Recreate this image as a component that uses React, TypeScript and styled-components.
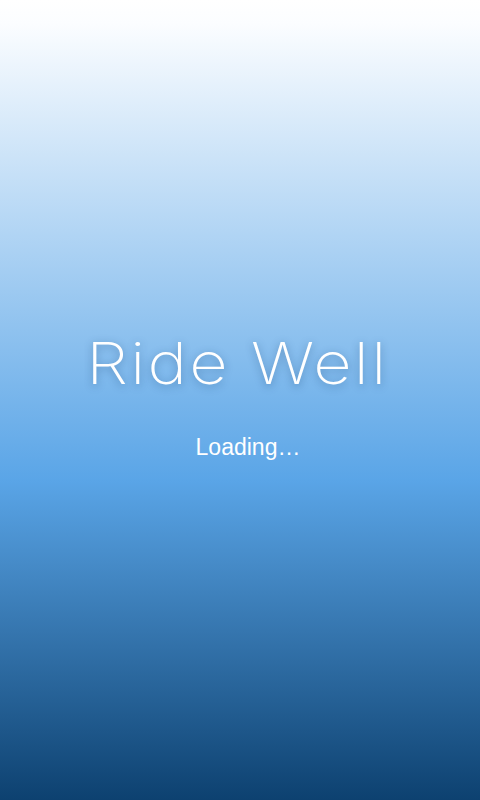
import React from "react";
import styled, { createGlobalStyle } from "styled-components";

const Global = createGlobalStyle`
  html, body { margin: 0; padding: 0; height: 100%; }
  body { font-family: "Liberation Sans", Arial, sans-serif; }
  #root { height: 100%; }
`;

const Screen = styled.main`
  box-sizing: border-box;
  height: 800px;
  width: 100%;
  display: flex;
  flex-direction: column;
  align-items: center;
  padding-top: 334px;
  background: linear-gradient(
    180deg,
    #ffffff 0%,
    #fbfdff 3%,
    #5aa5e7 60%,
    #0d4170 100%
  );
`;

const Title = styled.h1`
  margin: 0 6px 0 0;
  font-family: Inter, "Liberation Sans", sans-serif;
  font-weight: 200;
  font-size: 58px;
  line-height: 58px;
  letter-spacing: 2px;
  color: #ffffff;
  transform: scaleX(1.15);
  text-shadow: 0 2px 8px rgba(20, 60, 110, 0.4);
`;

const Status = styled.p`
  margin: 44px 0 0;
  padding-left: 16px;
  font-family: "Liberation Sans", Arial, sans-serif;
  font-size: 23px;
  line-height: 23px;
  color: #ffffff;
`;

export default function App() {
  return (
    <>
      <Global />
      <Screen>
        <Title>Ride Well</Title>
        <Status>Loading…</Status>
      </Screen>
    </>
  );
}
